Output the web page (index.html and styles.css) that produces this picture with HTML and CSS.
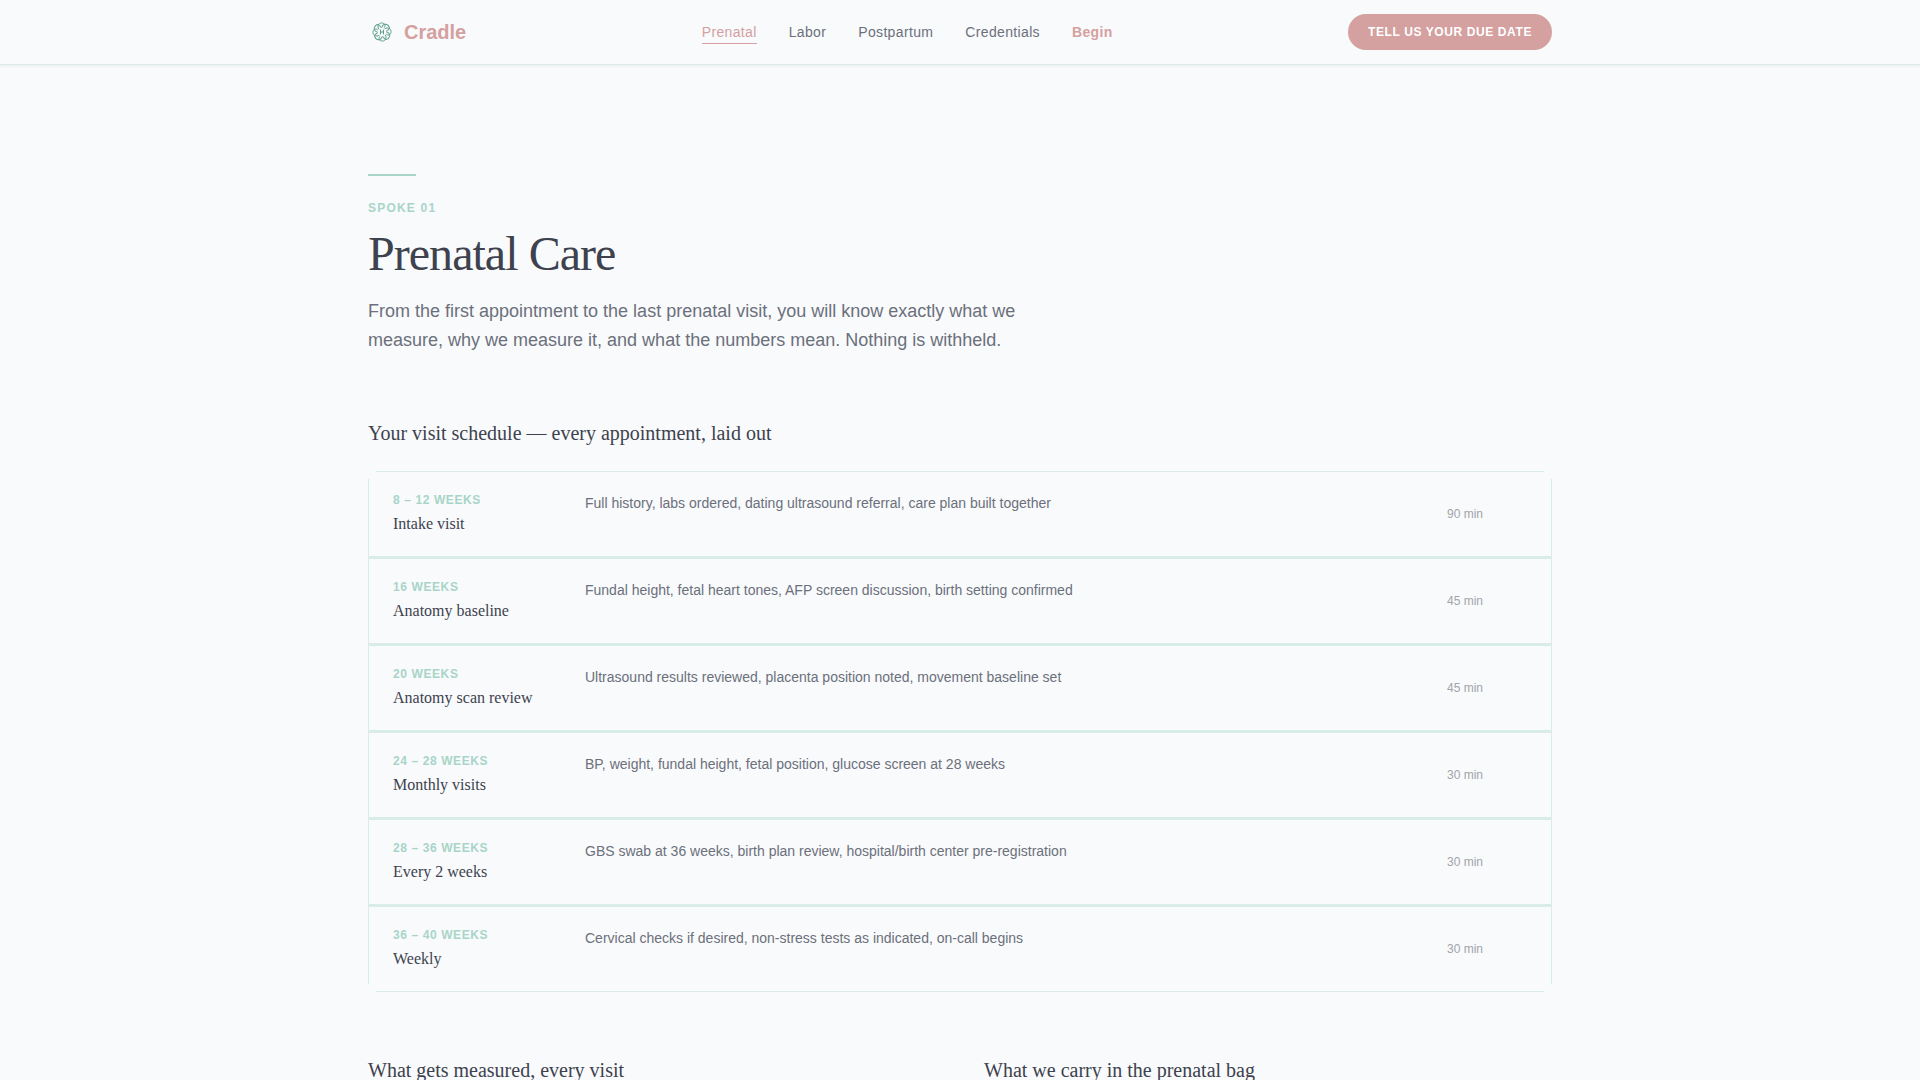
FILE: index.html
```html
<!DOCTYPE html>
<html lang="en">
<head>
<meta charset="utf-8">
<meta name="viewport" content="width=device-width, initial-scale=1">
<title>Cradle — Prenatal Care</title>
<link rel="stylesheet" href="styles.css">
</head>
<body>
<header class="site-header">
  <div class="container header-inner">
    <a class="brand" href="#">
      <svg class="brand-mark" viewBox="0 0 28 28" aria-hidden="true">
        <defs>
          <path id="petal" d="M10.6 11C9 8 10.4 5 13.6 5C16.6 5 18 7 16.4 9.4"/>
        </defs>
        <g fill="none" stroke="#5a9f8a" stroke-width="1" stroke-linecap="round">
          <use href="#petal"/>
          <use href="#petal" transform="rotate(45 14 14)"/>
          <use href="#petal" transform="rotate(90 14 14)"/>
          <use href="#petal" transform="rotate(135 14 14)"/>
          <use href="#petal" transform="rotate(180 14 14)"/>
          <use href="#petal" transform="rotate(225 14 14)"/>
          <use href="#petal" transform="rotate(270 14 14)"/>
          <use href="#petal" transform="rotate(315 14 14)"/>
          <path d="M12.5 12v4M15.5 12v4M12.5 14h3"/>
        </g>
      </svg>
      <span>Cradle</span>
    </a>
    <nav class="main-nav" aria-label="Main">
      <a class="nav-link is-active" href="#prenatal">Prenatal</a>
      <a class="nav-link" href="#labor">Labor</a>
      <a class="nav-link" href="#postpartum">Postpartum</a>
      <a class="nav-link" href="#credentials">Credentials</a>
      <a class="nav-link is-strong" href="#begin">Begin</a>
    </nav>
    <button class="cta" type="button">Tell us your due date</button>
  </div>
</header>

<main class="container page" id="prenatal">
  <div class="intro">
    <p class="eyebrow">Spoke 01</p>
    <h1 class="title">Prenatal Care</h1>
    <p class="lead">From the first appointment to the last prenatal visit, you will know exactly what we measure, why we measure it, and what the numbers mean. Nothing is withheld.</p>
  </div>

  <h2 class="subhead" id="schedule-title">Your visit schedule — every appointment, laid out</h2>
  <div class="schedule">
    <table class="visits" aria-labelledby="schedule-title">
      <tbody>
        <tr><th scope="row"><span class="weeks">8 – 12 weeks</span><span class="visit">Intake visit</span></th><td class="detail">Full history, labs ordered, dating ultrasound referral, care plan built together</td><td class="length">90 min</td></tr>
        <tr><th scope="row"><span class="weeks">16 weeks</span><span class="visit">Anatomy baseline</span></th><td class="detail">Fundal height, fetal heart tones, AFP screen discussion, birth setting confirmed</td><td class="length">45 min</td></tr>
        <tr><th scope="row"><span class="weeks">20 weeks</span><span class="visit">Anatomy scan review</span></th><td class="detail">Ultrasound results reviewed, placenta position noted, movement baseline set</td><td class="length">45 min</td></tr>
        <tr><th scope="row"><span class="weeks">24 – 28 weeks</span><span class="visit">Monthly visits</span></th><td class="detail">BP, weight, fundal height, fetal position, glucose screen at 28 weeks</td><td class="length">30 min</td></tr>
        <tr><th scope="row"><span class="weeks">28 – 36 weeks</span><span class="visit">Every 2 weeks</span></th><td class="detail">GBS swab at 36 weeks, birth plan review, hospital/birth center pre-registration</td><td class="length">30 min</td></tr>
        <tr><th scope="row"><span class="weeks">36 – 40 weeks</span><span class="visit">Weekly</span></th><td class="detail">Cervical checks if desired, non-stress tests as indicated, on-call begins</td><td class="length">30 min</td></tr>
      </tbody>
    </table>
  </div>

  <div class="columns">
    <h2 class="subhead">What gets measured, every visit</h2>
    <h2 class="subhead">What we carry in the prenatal bag</h2>
  </div>
</main>
</body>
</html>
```
FILE: styles.css
```css
:root {
  --paper: #f9fafc;
  --ink: #3d424e;
  --muted: #6b707b;
  --faint: #a1a4aa;
  --mint: #a8d5c8;
  --mint-pale: #d9ece8;
  --rose: #d4a0a0;
  --sans: "Liberation Sans", Arial, sans-serif;
  --serif: "Liberation Serif", "Times New Roman", serif;
}

* { box-sizing: border-box; }

html { scrollbar-width: none; }

body {
  margin: 0;
  background: var(--paper);
  color: var(--ink);
  font-family: var(--sans);
}

h1, h2, p { margin: 0; font-weight: 400; }

.container {
  width: 100%;
  max-width: 1280px;
  margin: 0 auto;
  padding: 0 48px;
}

.site-header {
  position: sticky;
  top: 0;
  background: var(--paper);
  border-bottom: 1px solid var(--mint-pale);
  box-shadow: 0 1px 3px rgba(61, 66, 80, 0.08);
}

.header-inner {
  display: flex;
  align-items: center;
  justify-content: space-between;
  height: 64px;
}

.brand {
  display: flex;
  align-items: center;
  gap: 8px;
  color: var(--rose);
  font-size: 20px;
  font-weight: 700;
  text-decoration: none;
}

.brand-mark { width: 28px; height: 28px; }

.main-nav { display: flex; gap: 32px; }

.nav-link {
  padding: 2px 0;
  border-bottom: 1px solid transparent;
  color: var(--muted);
  font-size: 14px;
  line-height: 18px;
  letter-spacing: 0.025em;
  text-decoration: none;
}

.nav-link.is-active { border-color: var(--rose); color: var(--rose); }
.nav-link.is-strong { color: var(--rose); font-weight: 700; }

.cta {
  padding: 10px 20px;
  border: 0;
  border-radius: 18px;
  background: var(--rose);
  color: #fff;
  font: 700 12px/16px var(--sans);
  letter-spacing: 0.05em;
  text-transform: uppercase;
}

.page { padding-top: 109px; }

.intro { max-width: 768px; }

.intro::before {
  content: "";
  display: block;
  width: 48px;
  height: 2px;
  margin-bottom: 24px;
  background: var(--mint);
}

.eyebrow {
  color: var(--mint);
  font-size: 12px;
  font-weight: 700;
  line-height: 16px;
  letter-spacing: 0.1em;
  text-transform: uppercase;
}

.title {
  margin: 12px 0 17px;
  font: 400 48px/52px var(--serif);
  letter-spacing: -0.02em;
}

.lead {
  max-width: 680px;
  color: var(--muted);
  font-size: 18px;
  line-height: 29px;
}

.subhead { font: 400 20px/28px var(--serif); }

.page > .subhead { margin: 64px 0 24px; }

/* Frame drawn as four hairlines that stop short of the corners */
.schedule {
  --line: linear-gradient(var(--mint-pale), var(--mint-pale));
  padding: 1px;
  background:
    var(--line) top / calc(100% - 16px) 1px no-repeat,
    var(--line) bottom / calc(100% - 16px) 1px no-repeat,
    var(--line) left / 1px calc(100% - 16px) no-repeat,
    var(--line) right / 1px calc(100% - 16px) no-repeat;
}

.visits {
  width: 100%;
  border-collapse: collapse;
  table-layout: fixed;
}

.visits tr + tr { border-top: 3px solid var(--mint-pale); }

.visits th,
.visits td {
  height: 84px;
  padding: 20px 24px;
  text-align: left;
  vertical-align: top;
}

.visits th { width: 216px; padding-right: 0; font-weight: 400; }

.weeks, .visit { display: block; }

.weeks {
  color: var(--mint);
  font-size: 12px;
  font-weight: 700;
  line-height: 16px;
  letter-spacing: 0.05em;
  text-transform: uppercase;
}

.visit {
  margin-top: 4px;
  font: 400 16px/24px var(--serif);
}

.visits .detail {
  padding-left: 0;
  color: var(--muted);
  font-size: 14px;
  line-height: 22px;
}

.visits .length {
  width: 128px;
  padding-left: 24px;
  color: var(--faint);
  font-size: 12px;
  vertical-align: middle;
}

.columns {
  display: grid;
  grid-template-columns: 1fr 1fr;
  gap: 48px;
  margin-top: 64px;
}
```
